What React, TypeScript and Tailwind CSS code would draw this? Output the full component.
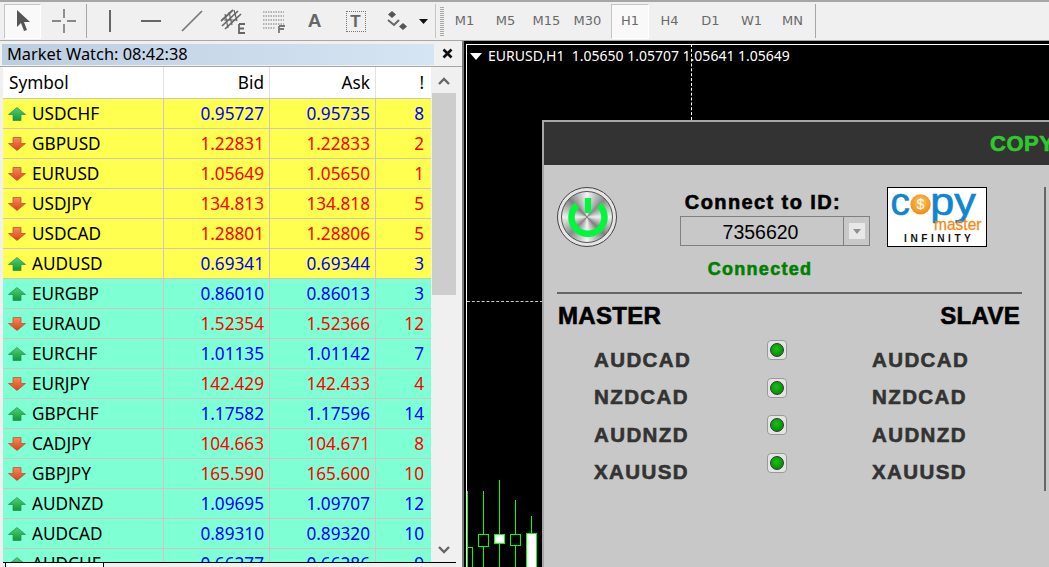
const quotes = [
  { sym: 'USDCHF', bid: '0.95727', ask: '0.95735', spread: 8, up: true, bg: 'bg-[#ffff4f]' },
  { sym: 'GBPUSD', bid: '1.22831', ask: '1.22833', spread: 2, up: false, bg: 'bg-[#ffff4f]' },
  { sym: 'EURUSD', bid: '1.05649', ask: '1.05650', spread: 1, up: false, bg: 'bg-[#ffff4f]' },
  { sym: 'USDJPY', bid: '134.813', ask: '134.818', spread: 5, up: false, bg: 'bg-[#ffff4f]' },
  { sym: 'USDCAD', bid: '1.28801', ask: '1.28806', spread: 5, up: false, bg: 'bg-[#ffff4f]' },
  { sym: 'AUDUSD', bid: '0.69341', ask: '0.69344', spread: 3, up: true, bg: 'bg-[#ffff4f]' },
  { sym: 'EURGBP', bid: '0.86010', ask: '0.86013', spread: 3, up: true, bg: 'bg-[#7fffd4]' },
  { sym: 'EURAUD', bid: '1.52354', ask: '1.52366', spread: 12, up: false, bg: 'bg-[#7fffd4]' },
  { sym: 'EURCHF', bid: '1.01135', ask: '1.01142', spread: 7, up: true, bg: 'bg-[#7fffd4]' },
  { sym: 'EURJPY', bid: '142.429', ask: '142.433', spread: 4, up: false, bg: 'bg-[#7fffd4]' },
  { sym: 'GBPCHF', bid: '1.17582', ask: '1.17596', spread: 14, up: true, bg: 'bg-[#7fffd4]' },
  { sym: 'CADJPY', bid: '104.663', ask: '104.671', spread: 8, up: false, bg: 'bg-[#7fffd4]' },
  { sym: 'GBPJPY', bid: '165.590', ask: '165.600', spread: 10, up: false, bg: 'bg-[#7fffd4]' },
  { sym: 'AUDNZD', bid: '1.09695', ask: '1.09707', spread: 12, up: true, bg: 'bg-[#7fffd4]' },
  { sym: 'AUDCAD', bid: '0.89310', ask: '0.89320', spread: 10, up: true, bg: 'bg-[#7fffd4]' },
  { sym: 'AUDCHF', bid: '0.66277', ask: '0.66286', spread: 9, up: true, bg: 'bg-[#7fffd4]' },
];

const timeframes = ['M1', 'M5', 'M15', 'M30', 'H1', 'H4', 'D1', 'W1', 'MN'];
const pairs = ['AUDCAD', 'NZDCAD', 'AUDNZD', 'XAUUSD'];

function TrendArrow({ up }: { up: boolean }) {
  const id = up ? 'arrowUp' : 'arrowDown';
  return (
    <svg width="18" height="14" viewBox="0 0 18 14" className="shrink-0">
      <defs>
        <linearGradient id={id} x1="0" y1="0" x2="0" y2="1">
          <stop offset="0" stopColor={up ? '#4fd078' : '#f58a5a'} />
          <stop offset="1" stopColor={up ? '#0f9a3a' : '#e0401c'} />
        </linearGradient>
      </defs>
      {up ? (
        <path d="M9 0.5 L17.5 7.5 L13 7.5 L13 13.5 L5 13.5 L5 7.5 L0.5 7.5 Z" fill={`url(#${id})`} stroke="#2f8a4a" strokeWidth="0.7" />
      ) : (
        <path d="M9 13.5 L17.5 6.5 L13 6.5 L13 0.5 L5 0.5 L5 6.5 L0.5 6.5 Z" fill={`url(#${id})`} stroke="#b84a2a" strokeWidth="0.7" />
      )}
    </svg>
  );
}

function ToolButton({ children, active }: { children?: React.ReactNode; active?: boolean }) {
  return (
    <div className="w-[41px] h-[35px] flex items-center justify-center shrink-0">
      <div className={`w-[37px] h-[35px] flex items-center justify-center ${active ? 'bg-[#f9f9f9] border border-[#c4c4c4] border-r-white border-b-white' : ''}`}>
        {children}
      </div>
    </div>
  );
}

function Grip() {
  return <div className="w-[4px] h-[29px] shrink-0 bg-[repeating-linear-gradient(to_bottom,#a8a8a8_0,#a8a8a8_1px,#f0f0f0_1px,#f0f0f0_2px)]" />;
}

function Toolbar() {
  return (
    <div className="h-[41px] shrink-0 border-t-2 border-b border-[#a6a6a6] flex items-center pl-[2px] bg-[#f0f0f0] font-['DejaVu_Sans',sans-serif] text-[13px] text-[#6a6a6a]">
      <ToolButton active>
        <svg width="16" height="24" viewBox="0 0 16 24"><path d="M2 1 L2 18 L6 14 L9 22 L12 21 L9 13 L15 13 Z" fill="#555" /></svg>
      </ToolButton>
      <ToolButton>
        <svg width="24" height="24" viewBox="0 0 24 24" stroke="#666" strokeWidth="1.4"><path d="M12 0 V9 M12 15 V24 M0 12 H9 M15 12 H24" /></svg>
      </ToolButton>
      <div className="w-px h-[34px] bg-[#a6a6a6] mx-[2px] shrink-0" />
      <ToolButton>
        <svg width="4" height="22" viewBox="0 0 4 22"><rect x="1" width="2" height="22" fill="#666" /></svg>
      </ToolButton>
      <ToolButton>
        <svg width="20" height="4" viewBox="0 0 20 4"><rect y="1" width="20" height="2" fill="#666" /></svg>
      </ToolButton>
      <ToolButton>
        <svg width="22" height="22" viewBox="0 0 22 22"><path d="M1 21 L21 1" stroke="#777" strokeWidth="1.7" /></svg>
      </ToolButton>
      <ToolButton>
        <svg width="26" height="26" viewBox="0 0 26 26" fill="none" stroke="#666" strokeWidth="1.2">
          <path d="M1 13 L13 2 M2 18 L18 3 M5 21 L21 6" strokeWidth="1.7" />
          <path d="M5 6 L8 20 M9 4 L12 17 M14 2 L17 13 M4 12 L17 12" />
          <path d="M19 16 H25 M19 16 V25 H25 M19 20.5 H24" strokeWidth="1.8" />
        </svg>
      </ToolButton>
      <ToolButton>
        <svg width="24" height="24" viewBox="0 0 24 24" fill="none" stroke="#777" strokeWidth="1.2" strokeDasharray="1.5 1">
          <path d="M1 3 H22 M1 7 H22 M1 11 H22 M1 15 H22 M1 19 H13" />
          <path d="M17 17 H23 M17 17 V24 M17 20 H22" strokeDasharray="none" strokeWidth="1.8" />
        </svg>
      </ToolButton>
      <ToolButton>
        <span className="font-['Liberation_Sans',sans-serif] font-bold text-[19px] text-[#666]">A</span>
      </ToolButton>
      <ToolButton>
        <div className="w-[20px] h-[21px] border border-dotted border-[#777] flex items-center justify-center font-['Liberation_Sans',sans-serif] font-bold text-[17px] text-[#666] leading-none">T</div>
      </ToolButton>
      <ToolButton>
        <svg width="20" height="20" viewBox="0 0 20 20" fill="#555">
          <path d="M5 0 L9 3.5 L5 7 L1 3.5 Z M16 12 L20 15.5 L16 19 L12 15.5 Z" />
          <path d="M1 9 L7 14 L12 9" fill="none" stroke="#666" strokeWidth="2" />
        </svg>
      </ToolButton>
      <div className="w-[13px] flex justify-center shrink-0">
        <svg width="9" height="5" viewBox="0 0 9 5"><path d="M0 0 H9 L4.5 5 Z" fill="#111" /></svg>
      </div>
      <div className="w-px h-[34px] bg-[#c6c6c6] ml-[5px] shrink-0" />
      <div className="ml-[4px]"><Grip /></div>
      {timeframes.map((tf) => (
        <div key={tf} className="w-[41px] h-[35px] shrink-0 flex items-center justify-end">
          <div className={`h-[35px] flex items-center justify-center ${tf === 'H1' ? 'w-[38px] bg-[#f9f9f9] border border-[#c4c4c4] border-r-white border-b-white' : 'w-[41px]'}`}>
            {tf}
          </div>
        </div>
      ))}
      <div className="w-px h-[34px] bg-[#a6a6a6] ml-[2px] shrink-0" />
    </div>
  );
}

function MarketWatch() {
  return (
    <aside className="w-[462px] shrink-0 flex flex-col bg-[#f0f0f0] font-['Noto_Sans',sans-serif]">
      <div className="h-[25px] shrink-0 pt-[3px] pl-[2px] flex items-start">
        <div className="w-[432px] h-[21px] bg-gradient-to-r from-[#bccde0] to-[#d6e5f3] pl-[5px] text-[16.4px] leading-[19px] text-black">
          Market Watch: 08:42:38
        </div>
        <div className="w-[26px] flex justify-center pt-[4px]">
          <svg width="11" height="11" viewBox="0 0 11 11"><path d="M1.5 1.5 L9.5 9.5 M9.5 1.5 L1.5 9.5" stroke="#111" strokeWidth="2.6" /></svg>
        </div>
      </div>
      <div className="flex-1 min-h-0 flex pl-[3px] pr-[5px] border-t border-[#a6a6a6]">
        <div className="w-[428px] shrink-0 overflow-hidden text-[17.2px]">
          <div className="h-[32px] bg-white border-b border-[#c8c8c8] flex leading-[32px] text-black">
            <div className="w-[161px] border-r border-[#e2e2e2] pl-[6px]">Symbol</div>
            <div className="w-[106px] border-r border-[#e2e2e2] text-right pr-[5px]">Bid</div>
            <div className="w-[106px] border-r border-[#e2e2e2] text-right pr-[5px]">Ask</div>
            <div className="flex-1 text-right pr-[7px]">!</div>
          </div>
          {quotes.map((q) => (
            <div key={q.sym} className={`h-[30px] flex border-b border-[#d4c4c4] leading-[29px] ${q.bg} ${q.up ? 'text-[#0000ff]' : 'text-[#ff0000]'}`}>
              <div className="w-[161px] border-r border-[#d4c4c4] pl-[5px] flex items-center gap-[6px] text-black">
                <TrendArrow up={q.up} />
                {q.sym}
              </div>
              <div className="w-[106px] border-r border-[#d4c4c4] text-right pr-[5px]">{q.bid}</div>
              <div className="w-[106px] border-r border-[#d4c4c4] text-right pr-[5px]">{q.ask}</div>
              <div className="flex-1 text-right pr-[7px]">{q.spread}</div>
            </div>
          ))}
        </div>
        <div className="w-[26px] shrink-0 flex flex-col items-center pt-[10px] pb-[8px]">
          <svg width="12" height="8" viewBox="0 0 12 8"><path d="M1 7 L6 2 L11 7" fill="none" stroke="#666" strokeWidth="2.4" /></svg>
          <div className="w-[24px] h-[202px] bg-[#cdcdcd] mt-[8px]" />
          <svg width="12" height="8" viewBox="0 0 12 8" className="mt-auto"><path d="M1 1 L6 6 L11 1" fill="none" stroke="#666" strokeWidth="2.4" /></svg>
        </div>
      </div>
      <div className="h-[5px] shrink-0 ml-[3px] mr-[6px] border-t border-black flex">
        <div className="ml-[2px] w-[99px] h-full bg-white border-x border-black" />
      </div>
    </aside>
  );
}

function PowerButton() {
  return (
    <div className="w-[60px] h-[60px] rounded-full border border-[#444] bg-[#e4e4e4] p-[3px]">
      <div className="w-full h-full rounded-full relative border border-[#555] bg-[conic-gradient(#f4f4f4_0deg,#8a8a8a_45deg,#efefef_90deg,#808080_135deg,#f4f4f4_180deg,#8a8a8a_225deg,#efefef_270deg,#808080_315deg,#f4f4f4_360deg)]">
        <svg width="52" height="52" viewBox="0 0 52 52" className="absolute left-0 top-0">
          <path d="M15 13 A16.5 16.5 0 1 0 37 13" fill="none" stroke="#00f83c" strokeWidth="6.5" />
          <rect x="22.8" y="6" width="6.4" height="15" fill="#00f83c" />
        </svg>
      </div>
    </div>
  );
}

function Logo() {
  return (
    <svg width="100" height="60" viewBox="0 0 100 60" className="bg-white border border-black font-normal">
      <defs>
        <radialGradient id="coin" cx="0.5" cy="0.4" r="0.6">
          <stop offset="0" stopColor="#ffc766" />
          <stop offset="1" stopColor="#f08a10" />
        </radialGradient>
      </defs>
      <text x="2" y="28" fontFamily="Liberation Sans" fontSize="40" fill="#0f86cf" stroke="#0f86cf" strokeWidth="0.7">c</text>
      <circle cx="33" cy="17" r="10.5" fill="url(#coin)" />
      <text x="33" y="22" textAnchor="middle" fontFamily="Liberation Sans" fontSize="15" fill="#fff">$</text>
      <text x="43" y="28" fontFamily="Liberation Sans" fontSize="40" textLength="47" lengthAdjust="spacingAndGlyphs" fill="#0f86cf" stroke="#0f86cf" strokeWidth="0.7">py</text>
      <text x="47" y="43" fontFamily="Liberation Sans" fontSize="18" textLength="49" lengthAdjust="spacingAndGlyphs" fill="#f58a12" stroke="#f58a12" strokeWidth="0.3">master</text>
      <text x="16" y="56" fontFamily="Liberation Sans" fontWeight="bold" fontSize="10.5" textLength="69" lengthAdjust="spacing" fill="#111">INFINITY</text>
    </svg>
  );
}

function Led() {
  return (
    <div className="w-[20px] h-[20px] rounded-[4px] bg-[#e4e4e4] border border-[#9a9a9a] flex items-center justify-center">
      <div className="w-[14px] h-[14px] rounded-full border border-[#333] bg-[radial-gradient(circle_at_45%_40%,#14c414,#007a00)]" />
    </div>
  );
}

function CopyPanel() {
  return (
    <div className="absolute left-[78px] top-[79px] w-[520px] h-[460px] border-t-2 border-l-2 border-[#a6a6a6] bg-[#c8c8c8] font-['Liberation_Sans',sans-serif] font-bold [-webkit-text-stroke:0.6px]">
      <div className="h-[43px] bg-[#333333] pl-[446px] text-[22px] leading-[44px] text-[#2fc92f] tracking-[0.5px] overflow-hidden whitespace-nowrap">COPY</div>
      <div className="flex">
        <div className="w-[500px] shrink-0">
          <div className="h-[127px] flex items-start pl-[13px] pt-[22px]">
            <PowerButton />
            <div className="ml-[63px] w-[190px] flex flex-col items-center">
              <div className="text-[20px] leading-[28px] text-black tracking-[1.4px] mt-[1px] pr-[24px] whitespace-nowrap">Connect to ID:</div>
              <div className="w-[190px] h-[30px] border border-[#808080] flex font-normal text-[19.5px] text-black [-webkit-text-stroke:0]">
                <div className="flex-1 text-center leading-[30px] pl-[22px] pr-[25px]">7356620</div>
                <div className="w-[26px] border-l border-[#808080] flex items-center justify-center">
                  <div className="w-[16px] h-[16px] bg-[#e8e8e8] flex items-center justify-center">
                    <svg width="8" height="5" viewBox="0 0 8 5"><path d="M0 0 H8 L4 5 Z" fill="#909090" /></svg>
                  </div>
                </div>
              </div>
              <div className="text-[18px] leading-[22px] mt-[12px] text-[#008000] tracking-[1.3px] pr-[30px]">Connected</div>
            </div>
            <div className="ml-[17px] [-webkit-text-stroke:0]"><Logo /></div>
          </div>
          <div className="ml-[13px] mr-[22px] h-[2px] bg-[#666666]" />
          <div className="ml-[13px] mr-[24px] pt-[8px] flex justify-between text-[24px] leading-[28px] text-black tracking-[0.3px]">
            <span className="pl-px">MASTER</span>
            <span>SLAVE</span>
          </div>
          <div className="flex mt-[5px] text-[20.5px] leading-[37.5px] text-[#333333] tracking-[1.4px]">
            <div className="ml-[50px] w-[173px] pt-[5.5px]">
              {pairs.map((p) => <div key={p} className="h-[37.5px]">{p}</div>)}
            </div>
            <div className="w-[105px] flex flex-col gap-[17.5px] pt-[5px]">
              {pairs.map((p) => <Led key={p} />)}
            </div>
            <div className="pt-[5.5px]">
              {pairs.map((p) => <div key={p} className="h-[37.5px]">{p}</div>)}
            </div>
          </div>
        </div>
        <div className="w-[2px] mt-[22px] bg-[#666666]" />
      </div>
    </div>
  );
}

const candles = [
  { x: 14, wickTop: 450, top: 493, height: 13, fill: 'bg-black' },
  { x: 30, wickTop: 439, top: 493, height: 10, fill: 'bg-white' },
  { x: 46, wickTop: 459, top: 493, height: 12, fill: 'bg-black' },
  { x: 62, wickTop: 475, top: 492, height: 40, fill: 'bg-white' },
];

function Chart() {
  return (
    <main className="flex-1 relative overflow-hidden bg-black border-l-2 border-[#7a7a7a] font-['Noto_Sans',sans-serif]">
      <div className="absolute left-[2px] top-[3px] right-0 h-px bg-white" />
      <div className="absolute left-[2px] top-[3px] bottom-0 w-px bg-white" />
      {/* crosshair */}
      <div className="absolute left-[227px] top-[3px] h-[76px] border-l border-dashed border-white" />
      <div className="absolute left-[3px] top-[260px] w-[76px] border-t border-dashed border-[#cccccc]" />
      <div className="absolute left-[6px] top-[6px] flex items-center text-[14px] leading-[18px] text-white whitespace-pre">
        <svg width="12" height="7" viewBox="0 0 12 7" className="mr-[6px]"><path d="M0 0 H12 L6 7 Z" fill="#fff" /></svg>
        EURUSD,H1  1.05650 1.05707 1.05641 1.05649
      </div>
      {/* candles */}
      <div className="absolute left-[3px] top-[450px] bottom-0 w-px bg-[#00ff00]" />
      <div className="absolute left-[3px] top-[506px] w-[6px] h-[30px] border border-[#00ff00] bg-black" />
      {candles.map((c) => (
        <div key={c.x} className="absolute top-0 bottom-0" style={{ left: c.x }}>
          <div className="absolute left-[5px] w-px bottom-0 bg-[#00ff00]" style={{ top: c.wickTop }} />
          <div className={`absolute left-0 w-[11px] border-[1.5px] border-[#00ff00] ${c.fill}`} style={{ top: c.top, height: c.height }} />
        </div>
      ))}
      <CopyPanel />
    </main>
  );
}

export default function App() {
  return (
    <div className="w-[1049px] h-[567px] overflow-hidden flex flex-col bg-[#f0f0f0]">
      <Toolbar />
      <div className="flex-1 min-h-0 flex">
        <MarketWatch />
        <Chart />
      </div>
    </div>
  );
}
